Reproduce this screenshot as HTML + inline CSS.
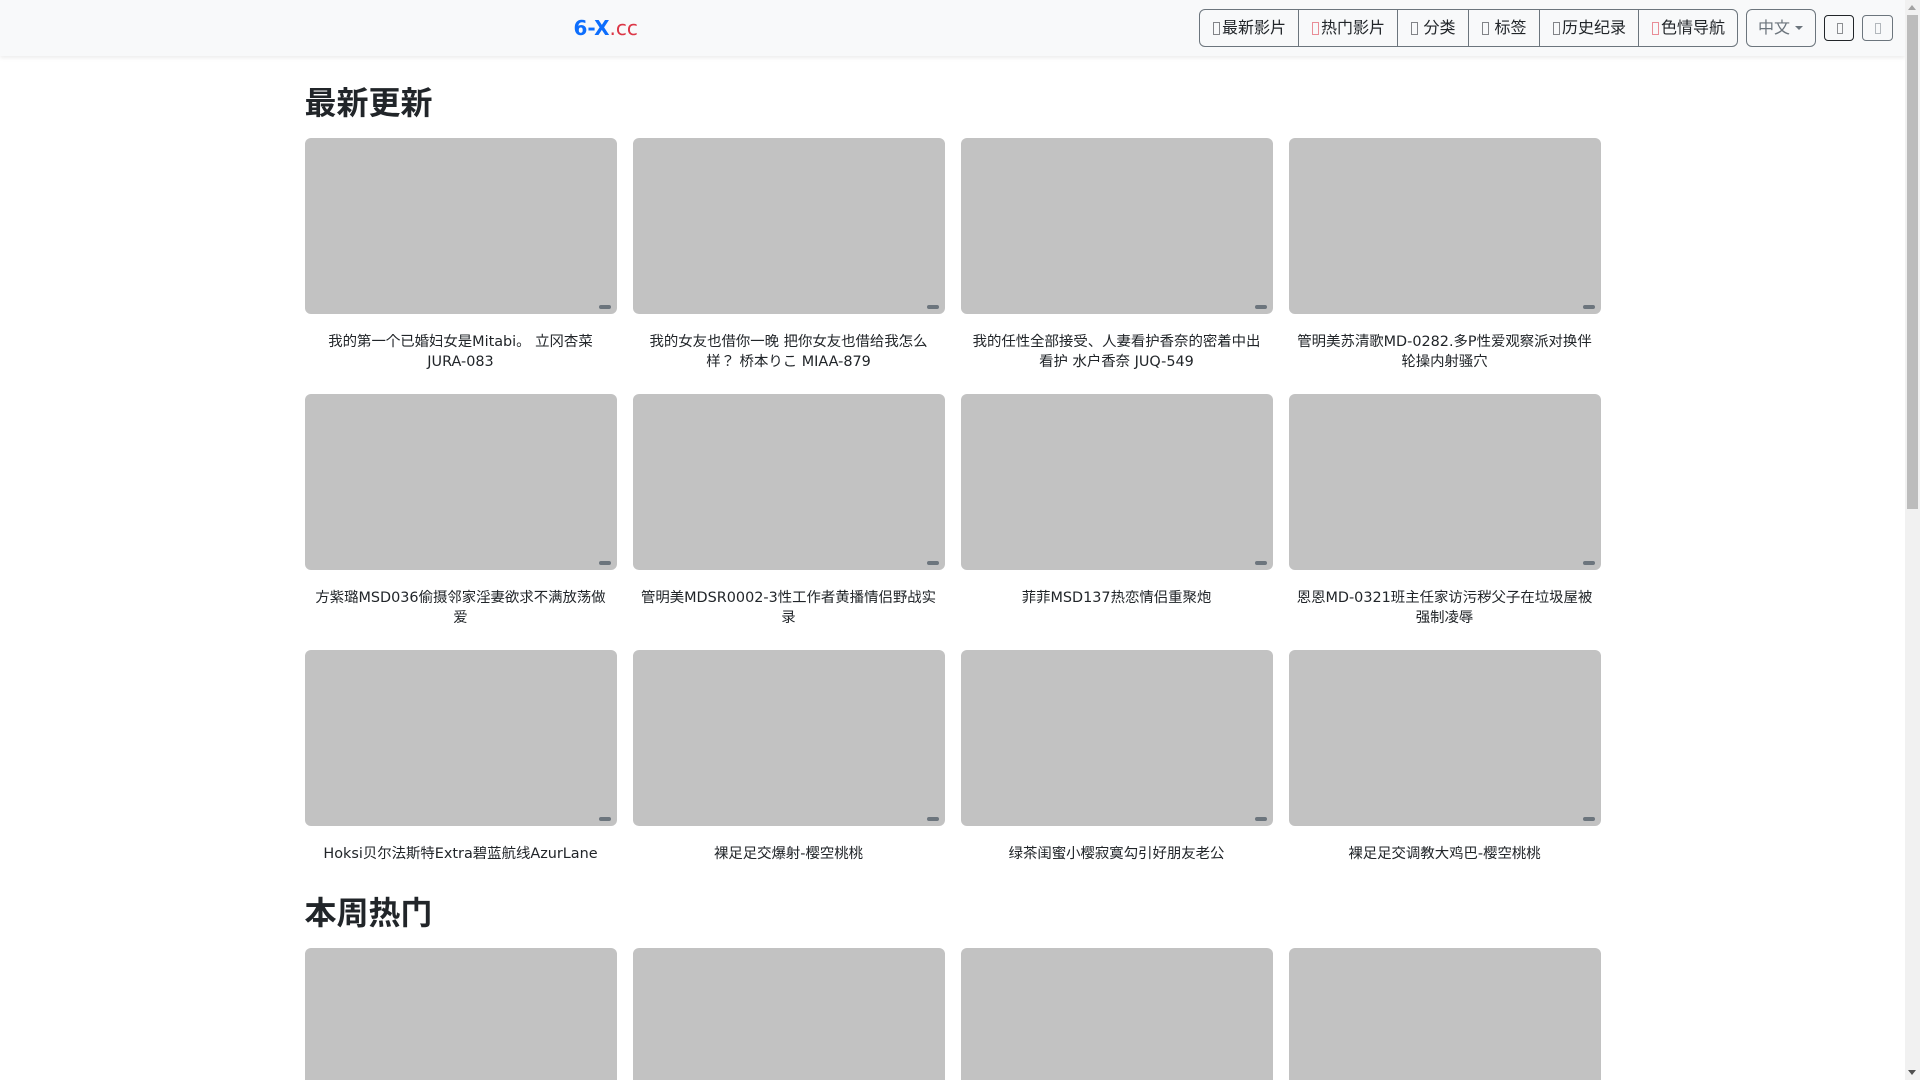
<!DOCTYPE html>
<html lang="ja"><head><meta charset="utf-8"><title>6-X.cc</title>
<style>
*{box-sizing:border-box}
html,body{margin:0;padding:0;width:1920px;height:1080px;overflow:hidden;background:#fff}
body{font-family:"DejaVu Sans","Noto Sans CJK JP",sans-serif;color:#212529;position:relative;font-size:16px}
.nav{position:absolute;left:0;top:0;width:1905px;height:56px;background:#f8f9fa;box-shadow:0 2px 4px rgba(0,0,0,.075)}
.logo{position:absolute;left:573.5px;top:16px;font-size:20px;line-height:24px;font-weight:700;color:#0d6efd;white-space:nowrap}
.logo span{font-weight:400;color:#dc3545}
.b{position:absolute;top:9px;height:38px;border:1px solid #6c757d;line-height:36px;padding-left:12px;white-space:nowrap;color:#212529;background:#f8f9fa}
.k{display:inline-block;width:10px;height:10px;position:relative;vertical-align:-1px;color:#212529}
.k.w{width:13.5px}
.k:before{content:"";position:absolute;left:.5px;top:-2px;width:5px;height:11px;border:1px solid currentColor;opacity:.55}
.k.r{color:#dc3545}
.s{position:absolute;top:15px;height:26px;border:1px solid #212529;border-radius:4px}
.s:before{content:"";position:absolute;left:50%;margin-left:-2.5px;top:7px;width:4px;height:9px;border:1px solid currentColor;opacity:.5}
.h{position:absolute;left:304.5px;font-size:32px;line-height:38px;font-weight:700;margin:0;white-space:nowrap}
.c{position:absolute;width:312px}
.i{height:176px;background:#c2c2c2;border-radius:6px;position:relative}
.i:after{content:"";position:absolute;right:6px;bottom:5px;width:12px;height:4px;border-radius:2px;background:#6c757d}
.t{margin-top:18px;font-size:14.4px;line-height:20px;text-align:center;color:#212529}
.sb{position:absolute;left:1905px;top:0;width:15px;height:1080px;background:#f1f1f1}
.th{position:absolute;left:2px;top:15px;width:11px;height:494px;background:#bcbcbc}
.up{position:absolute;left:3px;top:5px;width:0;height:0;border-left:4.5px solid transparent;border-right:4.5px solid transparent;border-bottom:5px solid #a3a3a3}
.dn{position:absolute;left:3px;bottom:5px;width:0;height:0;border-left:4.5px solid transparent;border-right:4.5px solid transparent;border-top:5px solid #505050}
</style></head><body>
<div class="nav">
<div class="logo">6-X<span>.cc</span></div>
<div class="b" style="left:1199px;width:100px;border-radius:6px 0 0 6px"><i class="k"></i>最新影片</div>
<div class="b" style="left:1298px;width:100px"><i class="k r"></i>热门影片</div>
<div class="b" style="left:1397px;width:72px"><i class="k w"></i>分类</div>
<div class="b" style="left:1468px;width:72px"><i class="k w"></i>标签</div>
<div class="b" style="left:1539px;width:100px"><i class="k"></i>历史纪录</div>
<div class="b" style="left:1638px;width:100px;border-radius:0 6px 6px 0"><i class="k r"></i>色情导航</div>
<div class="b" style="left:1746px;width:70px;border-radius:6px;color:#6c757d;padding-left:11px">中文<span style="display:inline-block;margin-left:5px;vertical-align:3px;border-top:4.8px solid;border-left:4.8px solid transparent;border-right:4.8px solid transparent"></span></div>
<div class="s" style="left:1824px;width:30px;color:#212529"></div>
<div class="s" style="left:1862px;width:31px;border-color:#6c757d;color:#6c757d"></div>
</div>
<h2 class="h" style="top:84px">最新更新</h2>
<div class="c" style="left:304.5px;top:138px"><div class="i"></div><div class="t">我的第一个已婚妇女是Mitabi。 立冈杏菜<br>JURA-083</div></div>
<div class="c" style="left:632.5px;top:138px"><div class="i"></div><div class="t">我的女友也借你一晚 把你女友也借给我怎么<br>样？ 桥本りこ MIAA-879</div></div>
<div class="c" style="left:960.5px;top:138px"><div class="i"></div><div class="t">我的任性全部接受、人妻看护香奈的密着中出<br>看护 水户香奈 JUQ-549</div></div>
<div class="c" style="left:1288.5px;top:138px"><div class="i"></div><div class="t">管明美苏清歌MD-0282.多P性爱观察派对换伴<br>轮操内射骚穴</div></div>
<div class="c" style="left:304.5px;top:394px"><div class="i"></div><div class="t">方紫璐MSD036偷摄邻家淫妻欲求不满放荡做<br>爱</div></div>
<div class="c" style="left:632.5px;top:394px"><div class="i"></div><div class="t">管明美MDSR0002-3性工作者黄播情侣野战实<br>录</div></div>
<div class="c" style="left:960.5px;top:394px"><div class="i"></div><div class="t">菲菲MSD137热恋情侣重聚炮</div></div>
<div class="c" style="left:1288.5px;top:394px"><div class="i"></div><div class="t">恩恩MD-0321班主任家访污秽父子在垃圾屋被<br>强制凌辱</div></div>
<div class="c" style="left:304.5px;top:650px"><div class="i"></div><div class="t">Hoksi贝尔法斯特Extra碧蓝航线AzurLane</div></div>
<div class="c" style="left:632.5px;top:650px"><div class="i"></div><div class="t">裸足足交爆射-樱空桃桃</div></div>
<div class="c" style="left:960.5px;top:650px"><div class="i"></div><div class="t">绿茶闺蜜小樱寂寞勾引好朋友老公</div></div>
<div class="c" style="left:1288.5px;top:650px"><div class="i"></div><div class="t">裸足足交调教大鸡巴-樱空桃桃</div></div>
<h2 class="h" style="top:894px">本周热门</h2>
<div class="c" style="left:304.5px;top:948px"><div class="i"></div></div>
<div class="c" style="left:632.5px;top:948px"><div class="i"></div></div>
<div class="c" style="left:960.5px;top:948px"><div class="i"></div></div>
<div class="c" style="left:1288.5px;top:948px"><div class="i"></div></div>
<div class="sb"><div class="up"></div><div class="th"></div><div class="dn"></div></div>
</body></html>
